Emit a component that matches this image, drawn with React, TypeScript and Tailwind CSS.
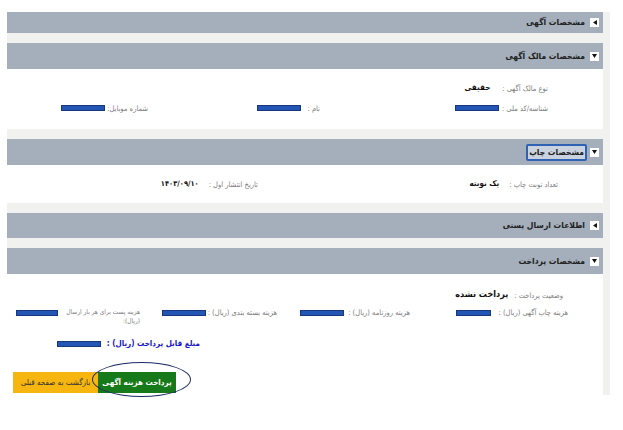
import React from "react";

function Tri({ open }: { open: boolean }) {
  return (
    <span className="w-[9px] h-[9px] bg-white flex items-center justify-center shrink-0">
      {open ? (
        <svg width="5" height="4" viewBox="0 0 5 4">
          <polygon points="0,0 5,0 2.5,4" fill="#111" />
        </svg>
      ) : (
        <svg width="4" height="5" viewBox="0 0 4 5">
          <polygon points="4,0 4,5 0,2.5" fill="#111" />
        </svg>
      )}
    </span>
  );
}

function Header({ title, open, focused, h = "h-[26px]" }: { title: string; open: boolean; focused?: boolean; h?: string }) {
  return (
    <div className={`flex items-center bg-[#a4afbb] pr-[4px] ${h}`}>
      <Tri open={open} />
      {focused ? (
        <span className="mr-[3px] px-[1px] h-[17px] flex items-center border-2 border-[#2f62b3] rounded-[2px] bg-[#c9d3df] text-[8.5px] font-bold text-[#1e1e1e]">
          {title}
        </span>
      ) : (
        <span className="mr-[5px] text-[8.5px] font-bold text-[#222]">{title}</span>
      )}
    </div>
  );
}

function Bar({ w = "w-[44px]", cls = "" }: { w?: string; cls?: string }) {
  return <span className={`block ${w} h-[6px] bg-[#2355b5] border border-[#17387c] shrink-0 ${cls}`} />;
}

function Label({ children, cls = "" }: { children: React.ReactNode; cls?: string }) {
  return <span className={`text-[#7d7d7d] leading-[9px] ${cls || "text-[7.5px]"}`}>{children}</span>;
}

function Value({ children }: { children: React.ReactNode }) {
  return <span className="text-[8px] font-bold text-[#111]">{children}</span>;
}

export default function App() {
  return (
    <div className="w-[623px] h-[430px] bg-white font-['DejaVu_Sans_Condensed','DejaVu_Sans',sans-serif] pt-[12px] pl-[7px]">
      <div dir="rtl" className="relative w-[603px] bg-[#f1f1ef] pr-[7px] flex flex-col gap-[10px]">
        {/* 1 */}
        <Header title="مشخصات آگهی" open={false} h="h-[21px]" />

        {/* 2 */}
        <div>
          <Header title="مشخصات مالک آگهی" open />
          <div className="bg-white h-[60px] pr-[55px] pt-[14px]">
            <div className="flex items-center gap-[12px] h-[10px]">
              <Label>نوع مالک آگهی :</Label>
              <Value>حقیقی</Value>
            </div>
            <div className="flex items-center mt-[10px] h-[10px]">
              <div className="w-[228px] flex items-center gap-[3px]">
                <Label>شناسه/کد ملی :</Label>
                <Bar />
              </div>
              <div className="w-[172px] flex items-center gap-[6px]">
                <Label>نام :</Label>
                <Bar />
              </div>
              <div className="flex items-center gap-[2px]">
                <Label>شماره موبایل:</Label>
                <Bar />
              </div>
            </div>
          </div>
        </div>

        {/* 3 */}
        <div>
          <Header title="مشخصات چاپ" open focused />
          <div className="bg-white h-[38px] pr-[45px] flex items-center">
            <div className="w-[300px] flex items-center gap-[10px]">
              <Label>تعداد نوبت چاپ :</Label>
              <Value>یک نوبته</Value>
            </div>
            <div className="flex items-center gap-[10px]">
              <Label>تاریخ انتشار اول :</Label>
              <span className="text-[7.5px] font-bold text-[#111]">۱۴۰۳/۰۹/۱۰</span>
            </div>
          </div>
        </div>

        {/* 4 */}
        <Header title="اطلاعات ارسال پستی" open={false} h="h-[25px]" />

        {/* 5 */}
        <div>
          <Header title="مشخصات پرداخت" open />
          <div className="bg-white h-[121px] pt-[16px] relative">
            <div className="flex items-center gap-[6px] pr-[40px] h-[10px]">
              <Label>وضعیت پرداخت :</Label>
              <span className="text-[9px] font-bold text-[#111]">پرداخت نشده</span>
            </div>
            <div className="flex items-start pr-[35px] mt-[8px]">
              <div className="w-[158px] flex items-center gap-[8px] h-[9px]">
                <Label>هزینه چاپ آگهی (ریال) :</Label>
                <Bar w="w-[35px]" />
              </div>
              <div className="w-[133px] flex items-center gap-[4px] h-[9px]">
                <Label>هزینه روزنامه (ریال) :</Label>
                <Bar />
              </div>
              <div className="w-[137px] flex items-center gap-[2px] h-[9px]">
                <Label>هزینه بسته بندی (ریال) :</Label>
                <Bar />
              </div>
              <div className="flex items-start gap-[1px]">
                <Label cls="w-[81px] text-[6.5px]">هزینه پست برای هر بار ارسال (ریال):</Label>
                <Bar w="w-[42px]" cls="mt-[2px]" />
              </div>
            </div>
            <div className="flex items-center gap-[6px] pr-[403px] mt-[12px]">
              <span className="text-[8px] font-bold text-[#1414c8]">مبلغ قابل پرداخت (ریال) :</span>
              <Bar />
            </div>
            <div dir="ltr" className="flex pl-[6px] mt-[22px]">
              <button className="w-[85px] h-[21px] bg-[#f6b60f] text-[8px] text-[#333]">بازگشت به صفحه قبلی</button>
              <button className="w-[78px] h-[21px] bg-[#16791a] text-[8px] font-bold text-white">پرداخت هزینه آگهی</button>
            </div>
            <div className="absolute left-[85px] top-[88px] w-[99px] h-[35px] rounded-[50%] border-[1.5px] border-[#1e2a66]" />
          </div>
        </div>
      </div>
    </div>
  );
}
